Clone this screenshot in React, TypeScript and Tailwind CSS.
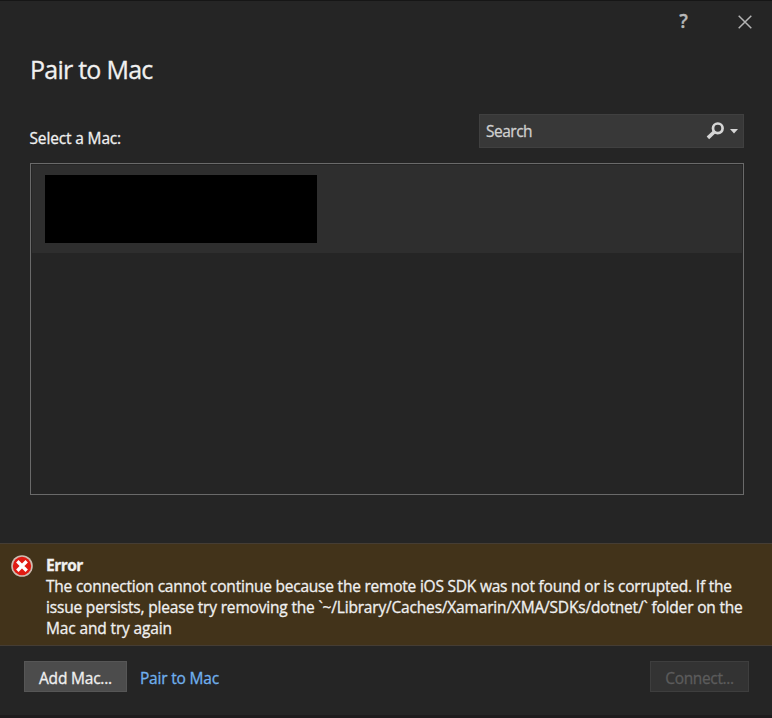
import React from 'react';

const ERROR_LINES = [
  { text: 'The connection cannot continue because the remote iOS SDK was not found or is corrupted. If the', spacing: 'tracking-[-0.22px]' },
  { text: 'issue persists, please try removing the `~/Library/Caches/Xamarin/XMA/SDKs/dotnet/` folder on the', spacing: 'tracking-[-0.18px]' },
  { text: 'Mac and try again', spacing: 'tracking-[-0.14px]' },
];

const CloseIcon = () => (
  <svg className="w-[14px] h-[14px]" viewBox="0 0 14 14" fill="none" stroke="#b4b4b4" strokeWidth="1.5">
    <path d="M0.7 0.7 13.3 13.3M13.3 0.7 0.7 13.3" />
  </svg>
);

const SearchIcon = () => (
  <svg className="w-[18px] h-[18px]" viewBox="0 0 18 18" fill="none" stroke="#d6d6d6">
    <circle cx="11.8" cy="6.3" r="4.8" strokeWidth="2.7" />
    <path d="M8.4 9.7 1.9 15.9" strokeWidth="3.6" />
  </svg>
);

const ErrorIcon = () => (
  <svg className="w-[22px] h-[22px]" viewBox="0 0 22 22" fill="none">
    <circle cx="11" cy="11" r="10.8" fill="#cfbdb2" />
    <circle cx="11" cy="11" r="9.2" fill="#e01b12" />
    <path d="m6.3 6.3 9.4 9.4m0-9.4-9.4 9.4" stroke="#fff" strokeWidth="3.4" />
  </svg>
);

const Header = () => (
  <header>
    <div className="flex h-[42px] items-center justify-end pr-5">
      <button type="button" aria-label="Help" className="mr-[50px] mb-0.5 text-[19px] leading-none font-semibold text-[#b8b8b8]">?</button>
      <button type="button" aria-label="Close"><CloseIcon /></button>
    </div>
    <h1 className="h-[71px] pl-[30px] pt-2 text-[25px] leading-9 tracking-[-0.75px] text-[#f0f0f0]">Pair to Mac</h1>
  </header>
);

const SearchBox = () => (
  <div className="flex h-[34px] w-[265px] items-center border border-[#404040] bg-[#383838] pl-1.5 pr-[5px]">
    <span className="flex-1 pt-px text-[15.5px] tracking-[-0.5px] text-[#d0d0d0]">Search</span>
    <SearchIcon />
    <svg className="ml-1.5 h-[5px] w-2" viewBox="0 0 8 5" fill="#d6d6d6">
      <path d="M0 0h8L4 4.5z" />
    </svg>
  </div>
);

const ErrorBanner = () => (
  <section role="alert" className="flex h-[103px] border-y border-[#453d34] bg-[#42331a] pl-[11px] pt-[11px] text-[#f0f0f0]">
    <ErrorIcon />
    <div className="ml-[13px] text-[15.5px] leading-[21px] whitespace-nowrap">
      <p className="font-bold tracking-[-0.5px]">Error</p>
      {ERROR_LINES.map((line) => (
        <p key={line.text} className={line.spacing}>{line.text}</p>
      ))}
    </div>
  </section>
);

const App: React.FC = () => {
  return (
    <div className="flex h-[718px] w-[772px] flex-col overflow-hidden border-b-[3px] border-t border-b-[#1e1c1d] border-t-[#161616] bg-[#252525] font-['Open_Sans','Noto_Sans',sans-serif] [-webkit-text-stroke:0.3px]">
      <Header />
      <div className="flex h-[34px] justify-between pl-[29.5px] pr-7">
        <label className="mt-[14px] text-[15.5px] leading-[21px] tracking-[-0.15px] text-[#f0f0f0]">Select a Mac:</label>
        <SearchBox />
      </div>
      <div className="ml-[30px] mt-[15px] h-[332px] w-[714px] border border-[#6a6a6a] p-px">
        <div className="h-[88px] bg-[#2e2e2e] pl-[13px] pt-[10px]">
          <div className="h-[68px] w-[272px] bg-black" />
        </div>
      </div>
      <div className="mt-[48px]">
        <ErrorBanner />
      </div>
      <footer className="flex items-center pl-6 pr-[23px] pt-[15px] text-[15.5px]">
        <button type="button" className="h-[31px] w-[103px] border border-[#565656] bg-[#4c4c4c] pt-1 leading-none tracking-[-0.2px] text-[#f0f0f0]">Add Mac...</button>
        <a href="#" className="ml-[13px] pt-1 tracking-[-0.2px] text-[#70b0ee]">Pair to Mac</a>
        <button type="button" disabled className="ml-auto h-[31px] w-[99px] border border-[#3e3e3e] bg-[#333333] pt-1 leading-none tracking-[-0.35px] text-[#5c5c5c]">Connect...</button>
      </footer>
    </div>
  );
};

export default App;
